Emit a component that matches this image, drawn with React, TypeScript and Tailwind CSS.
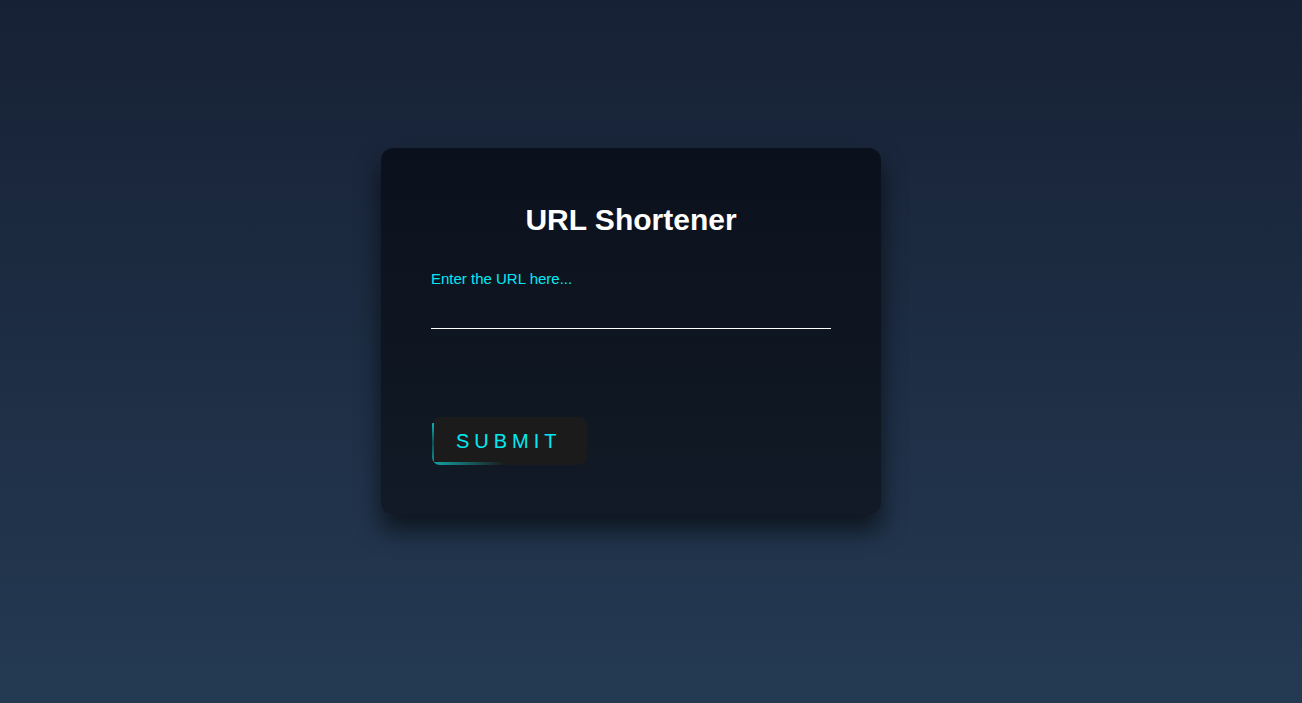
import { useState } from "react"

export default function App() {
  const [url, setUrl] = useState("")

  return (
    <div className="min-h-[703px] w-full bg-linear-to-b from-[#172135] to-[#243a53] font-['Liberation_Sans',Arial,sans-serif]">
      <div className="flex justify-center pr-10 pt-[148px]">
        <form
          className="w-[500px] rounded-xl bg-linear-to-b from-[#0b111c] to-[#111a26] px-[50px] pt-[53px] pb-[50px] shadow-[0_15px_25px_rgba(0,0,0,0.6)]"
          onSubmit={(e) => e.preventDefault()}
        >
          <h2 className="text-center text-[30px] font-bold leading-[38px] text-white">URL Shortener</h2>

          <label htmlFor="url" className="mt-[31px] block text-[15px] leading-[17px] text-[#03e9f4]">
            Enter the URL here...
          </label>
          <input
            id="url"
            value={url}
            onChange={(e) => setUrl(e.target.value)}
            className="mt-[2px] block w-full border-b border-white bg-transparent py-[10px] text-[16px] leading-[19px] text-white outline-none"
          />

          <button
            type="submit"
            className="relative mt-[88px] ml-px h-12 overflow-hidden rounded-lg bg-[#1b1b1b] pl-6 pr-[25px] text-[20px] uppercase leading-6 tracking-[5px] text-[#03e9f4]"
          >
            <span className="absolute left-0 top-[6px] bottom-[2px] w-[2px] bg-linear-to-b from-[#0fb3bb] via-[#0b4f55] to-[#12989c]" />
            <span className="absolute bottom-0 left-0 h-[3px] w-[72px] rounded-bl-lg bg-linear-to-r from-[#13a3a8] to-transparent" />
            Submit
          </button>
        </form>
      </div>
    </div>
  )
}
